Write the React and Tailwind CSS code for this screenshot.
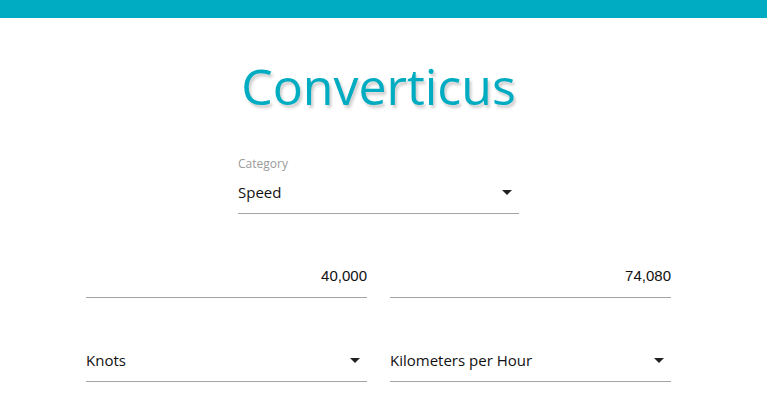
import React from "react";

const sans = "font-['Open_Sans','Noto_Sans',sans-serif]";

function Arrow() {
  return (
    <svg width="10" height="5" viewBox="0 0 10 5" className="shrink-0">
      <path d="M0 0 L10 0 L5 5 Z" fill="#222" />
    </svg>
  );
}

function SelectField({ label, value }) {
  return (
    <div className="flex flex-col">
      {label && (
        <span className={`text-[12px] leading-[16px] text-[#9b9b9b] ${sans}`}>{label}</span>
      )}
      <div className="flex items-center justify-between h-[42px] pr-[7px] border-b border-[#a3a3a3]">
        <span className={`text-[15px] text-[#111] ${sans}`}>{value}</span>
        <Arrow />
      </div>
    </div>
  );
}

function NumberField({ value }) {
  return (
    <div className="flex items-center justify-end h-[42px] border-b border-[#a3a3a3]">
      <span className="text-[15px] text-[#111] font-['Liberation_Sans',Arial,sans-serif]">{value}</span>
    </div>
  );
}

export default function App() {
  return (
    <div className="min-h-[417px] bg-white">
      <div className="h-[18px] bg-[#00acc1]" />
      <div className="w-[757px]">
        <h1
          className={`mt-[36px] text-center text-[50px] leading-[64px] text-[#00acc1] ${sans}`}
          style={{ textShadow: "2px 3px 3px rgba(0,0,0,0.2)" }}
        >
          Converticus
        </h1>
        <div className="mx-auto w-[281px] mt-[38px]">
          <SelectField label="Category" value="Speed" />
        </div>
        <div className="mx-auto w-[585px] mt-[42px] grid grid-cols-2 gap-x-[23px]">
          <NumberField value="40,000" />
          <NumberField value="74,080" />
          <div className="mt-[42px]">
            <SelectField value="Knots" />
          </div>
          <div className="mt-[42px]">
            <SelectField value="Kilometers per Hour" />
          </div>
        </div>
      </div>
    </div>
  );
}
